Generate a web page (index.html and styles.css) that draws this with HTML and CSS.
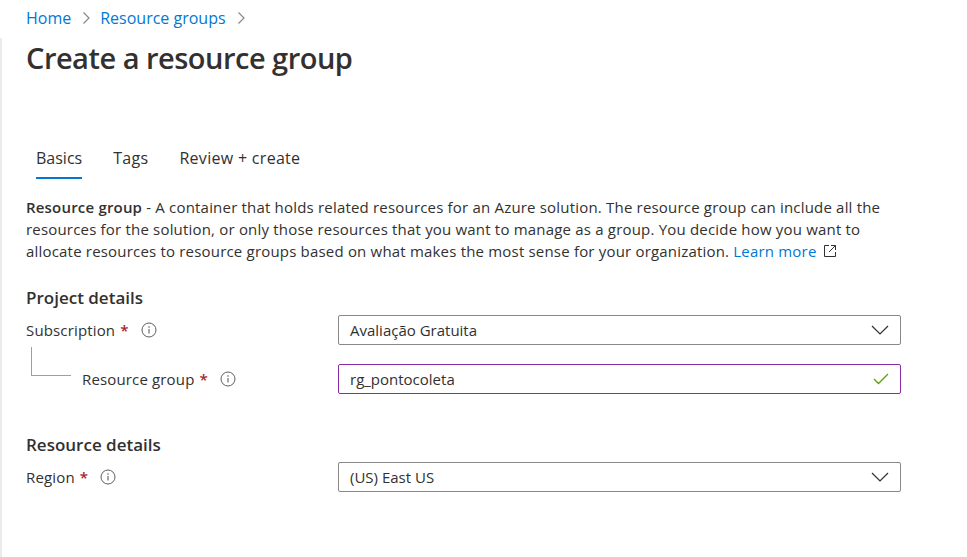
FILE: index.html
```html
<!DOCTYPE html>
<html lang="en">
<head>
<meta charset="utf-8">
<title>Create a resource group</title>
<link rel="stylesheet" href="styles.css">
</head>
<body>
<nav class="breadcrumb">
  <a class="crumb" href="#">Home</a>
  <svg class="crumb-sep" width="10" height="14" viewBox="0 0 10 14"><path d="M2.5 1.5 L8 7 L2.5 12.5" fill="none" stroke="#8a8886" stroke-width="1.2"/></svg>
  <a class="crumb" href="#">Resource groups</a>
  <svg class="crumb-sep" width="10" height="14" viewBox="0 0 10 14"><path d="M2.5 1.5 L8 7 L2.5 12.5" fill="none" stroke="#8a8886" stroke-width="1.2"/></svg>
</nav>
<main class="blade">
  <h1 class="title">Create a resource group</h1>

  <div class="tabs">
    <div class="tab active">Basics</div>
    <div class="tab">Tags</div>
    <div class="tab">Review + create</div>
  </div>

  <p class="desc"><strong>Resource group</strong> - A container that holds related resources for an Azure solution. The resource group can include all the resources for the solution, or only those resources that you want to manage as a group. You decide how you want to allocate resources to resource groups based on what makes the most sense for your organization. <a class="link" href="#">Learn more</a><svg class="ext" width="14" height="14" viewBox="0 0 14 14"><path d="M6 1.5 H1.5 V12.5 H12.5 V8" fill="none" stroke="#323130" stroke-width="1"/><path d="M8 1.5 H12.5 V6 M12.5 1.5 L6 8" fill="none" stroke="#323130" stroke-width="1"/></svg></p>

  <h2 class="section">Project details</h2>
  <div class="row">
    <div class="label">Subscription<span class="req">*</span>
      <svg class="info" width="16" height="16" viewBox="0 0 16 16"><circle cx="8" cy="8" r="7" fill="none" stroke="#605e5c" stroke-width="1"/><path d="M8 7 V11.5" stroke="#605e5c" stroke-width="1.1"/><circle cx="8" cy="5" r="0.8" fill="#605e5c"/></svg>
    </div>
    <div class="field">
      <span class="value">Avaliação Gratuita</span>
      <svg class="chev" width="18" height="10" viewBox="0 0 18 10"><path d="M1 1 L9 9 L17 1" fill="none" stroke="#323130" stroke-width="1.2"/></svg>
    </div>
  </div>
  <div class="row child">
    <span class="tree"></span>
    <div class="label sub">Resource group<span class="req">*</span>
      <svg class="info" width="16" height="16" viewBox="0 0 16 16"><circle cx="8" cy="8" r="7" fill="none" stroke="#605e5c" stroke-width="1"/><path d="M8 7 V11.5" stroke="#605e5c" stroke-width="1.1"/><circle cx="8" cy="5" r="0.8" fill="#605e5c"/></svg>
    </div>
    <div class="field valid">
      <span class="value">rg_pontocoleta</span>
      <svg class="check" width="16" height="12" viewBox="0 0 16 12"><path d="M1 6 L5.5 10.5 L15 1" fill="none" stroke="#57a300" stroke-width="1.3"/></svg>
    </div>
  </div>

  <h2 class="section second">Resource details</h2>
  <div class="row">
    <div class="label">Region<span class="req">*</span>
      <svg class="info" width="16" height="16" viewBox="0 0 16 16"><circle cx="8" cy="8" r="7" fill="none" stroke="#605e5c" stroke-width="1"/><path d="M8 7 V11.5" stroke="#605e5c" stroke-width="1.1"/><circle cx="8" cy="5" r="0.8" fill="#605e5c"/></svg>
    </div>
    <div class="field">
      <span class="value">(US) East US</span>
      <svg class="chev" width="18" height="10" viewBox="0 0 18 10"><path d="M1 1 L9 9 L17 1" fill="none" stroke="#323130" stroke-width="1.2"/></svg>
    </div>
  </div>
</main>
</body>
</html>
```

FILE: styles.css
```css
* { box-sizing: border-box; }
html, body { margin: 0; padding: 0; background: #fff; }
body {
  font-family: "Open Sans", "Noto Sans", sans-serif;
  color: #323130;
  font-size: 15px;
  height: 557px;
  overflow: hidden;
}
.breadcrumb {
  display: flex;
  align-items: center;
  padding: 7px 0 0 26px;
  height: 28px;
  line-height: 22px;
  font-size: 16px;
}
.crumb { color: #0078d4; text-decoration: none; }
.crumb-sep { margin: 0 9px 0 10px; }
.blade {
  border-left: 2px solid #ebebeb;
  padding: 0 0 0 24px;
  height: 529px;
}
.title {
  margin: 10px 0 0;
  font-size: 29px;
  font-weight: 600;
  line-height: 40px;
  letter-spacing: -0.5px;
}
.tabs {
  display: flex;
  gap: 31px;
  margin: 69px 0 0 10px;
}
.tab {
  font-size: 16px;
  line-height: 22px;
  padding-bottom: 8px;
  border-bottom: 2px solid transparent;
  letter-spacing: 0.3px;
}
.tab.active { border-bottom-color: #0078d4; letter-spacing: 0; }
.desc {
  margin: 17px 0 0;
  line-height: 22px;
  width: 880px;
  font-size: 15px;
  letter-spacing: 0.19px;
}
.desc strong { font-weight: 600; }
.link { color: #0078d4; text-decoration: none; }
.ext { margin-left: 6px; vertical-align: -1px; }
.section {
  margin: 24px 0 0;
  font-size: 17px;
  font-weight: 600;
  line-height: 24px;
}
.section.second { margin-top: 39px; }
.row {
  display: flex;
  align-items: center;
  margin-top: 5px;
  height: 30px;
}
.row.child { margin-top: 19px; }
.label {
  width: 312px;
  display: flex;
  align-items: center;
  font-size: 15px;
  letter-spacing: 0.15px;
}
.label.sub { width: 256px; }
.tree {
  align-self: flex-start;
  margin: -17px 0 0 5px;
  width: 40px;
  height: 29px;
  border-left: 1px solid #a19f9d;
  border-bottom: 1px solid #a19f9d;
  margin-right: 11px;
}
.req { color: #a4262c; margin-left: 5px; font-weight: 600; }
.info { margin-left: 12px; }
.field {
  width: 563px;
  height: 30px;
  border: 1px solid #8a8886;
  border-radius: 2px;
  display: flex;
  align-items: center;
  justify-content: space-between;
  padding: 0 11px 0 11px;
  font-size: 15px;
}
.field.valid { border-color: #8a2da5; }
.chev { margin-right: 0; }
.check { margin-right: 0; }
```
